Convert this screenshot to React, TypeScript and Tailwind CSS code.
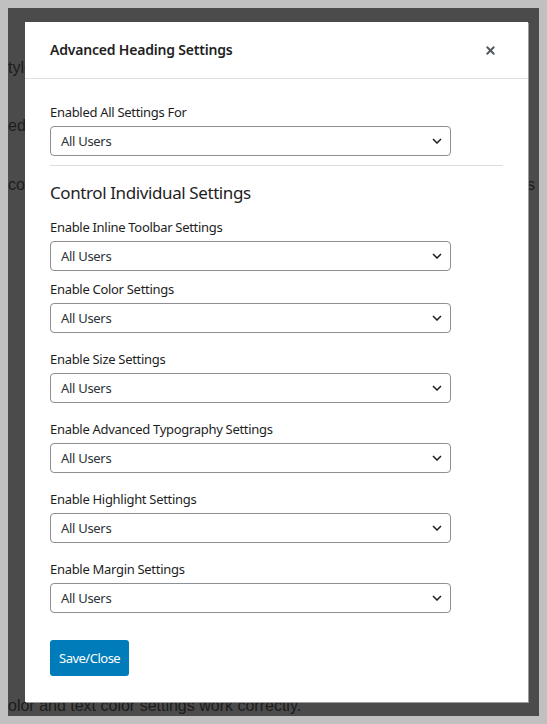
import { X } from "lucide-react";

const GROUPS = [
  { label: "Enable Inline Toolbar Settings", gap: "mb-[9px]" },
  { label: "Enable Color Settings", gap: "mb-[17px]" },
  { label: "Enable Size Settings", gap: "mb-[17px]" },
  { label: "Enable Advanced Typography Settings", gap: "mb-[17px]" },
  { label: "Enable Highlight Settings", gap: "mb-[17px]" },
  { label: "Enable Margin Settings", gap: "mb-[27px]" },
];

const Chevron = () => (
  <svg width="10" height="6" viewBox="0 0 10 6" fill="none" className="shrink-0">
    <path d="M1 1l4 4 4-4" stroke="#1e1e1e" strokeWidth="1.5" />
  </svg>
);

const SelectBox = () => (
  <div className="flex h-[30px] w-[401px] items-center justify-between rounded-[4px] border border-[#8c8f94] bg-white pl-[10px] pr-[8px] text-[13px] tracking-[-0.3px] text-[#2c3338]">
    <span>All Users</span>
    <Chevron />
  </div>
);

const Label = ({ children }: { children: string }) => (
  <div className="mb-[5px] text-[13px] leading-[18px] tracking-[-0.3px] text-[#1e1e1e]">{children}</div>
);

export default function App() {
  return (
    <div className="h-[724px] w-[547px] bg-[#c0c0c0] p-2">
      <div className="relative h-[708px] overflow-hidden bg-[#4b4b4b] font-['Liberation_Sans',Arial,sans-serif] text-[16px] leading-[24px] text-[#1c1c1c]">
        {/* page behind the modal */}
        <div className="whitespace-nowrap pt-[48px]">
          <p className="ml-[-8px]">style</p>
          <p className="mt-[34px]">ed.</p>
          <p className="mt-[35px] flex justify-between pr-[4px]">
            <span>cor</span>
            <span>s</span>
          </p>
          <p className="ml-[-8px] mt-[497px]">color and text color settings work correctly.</p>
        </div>

        {/* modal */}
        <div className="absolute left-[17px] top-[14px] flex h-[680px] w-[503px] flex-col bg-white font-['Noto_Sans','Open_Sans',sans-serif] shadow-[1px_1px_0_#9a9a9a]">
          <div className="flex h-[57px] shrink-0 items-center justify-between border-b border-[#e0e0e0] pl-[25px] pr-[31px]">
            <h1 className="text-[14px] font-semibold tracking-[-0.2px] text-[#1e1e1e]">Advanced Heading Settings</h1>
            <X className="h-[13px] w-[13px] text-[#50575e]" strokeWidth={3.5} />
          </div>

          <div className="px-[25px] pt-[24px]">
            <Label>Enabled All Settings For</Label>
            <SelectBox />
            <div className="mt-[9px] h-px w-full bg-[#dcdcde]" />
            <h2 className="mt-[15px] mb-[13px] text-[17px] leading-[24px] font-normal tracking-[-0.4px] text-[#1e1e1e]">
              Control Individual Settings
            </h2>

            {GROUPS.map((g) => (
              <div key={g.label} className={g.gap}>
                <Label>{g.label}</Label>
                <SelectBox />
              </div>
            ))}

            <button
              type="button"
              className="h-[36px] rounded-[3px] bg-[#007cba] px-[9px] text-[13px] tracking-[-0.5px] text-white"
            >
              Save/Close
            </button>
          </div>
        </div>
      </div>
    </div>
  );
}
